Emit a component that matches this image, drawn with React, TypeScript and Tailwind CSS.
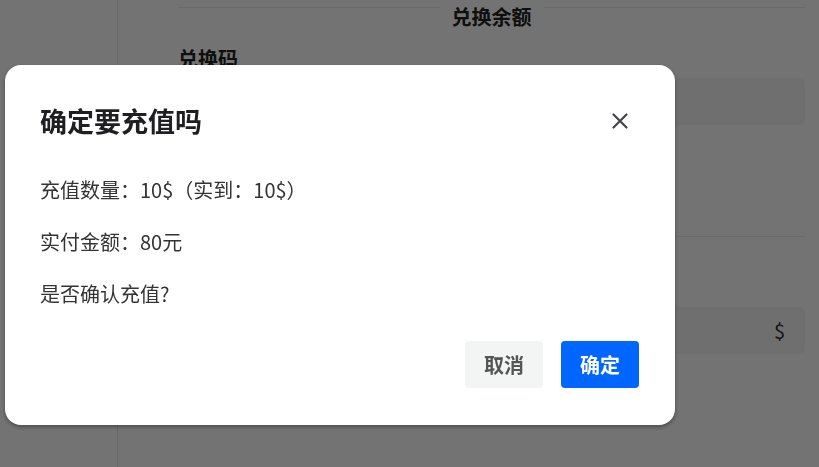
const FONT = { fontFamily: '"Noto Sans CJK SC", "Noto Sans", sans-serif' };

function Page() {
  return (
    <div className="flex h-[467px] w-[819px] bg-white" style={FONT}>
      {/* Sidebar */}
      <div className="w-[118px] shrink-0 border-r border-[#e5e7eb]" />

      {/* Main */}
      <div className="flex-1 pl-[60px] pr-[14px]">
        <div className="flex items-start">
          <div className="mt-[7px] h-px flex-1 bg-[#e8e8ea]" />
          <div className="mt-[1px] px-[12px] text-[20px] font-bold leading-[32px] text-[#222]">
            兑换余额
          </div>
          <div className="mt-[7px] h-px flex-1 bg-[#e8e8ea]" />
        </div>

        <div className="mt-[12px] text-[20px] font-bold leading-[28px] text-[#222]">兑换码</div>
        <div className="mt-[5px] h-[47px] rounded-[6px] bg-[#f6f6f8]" />

        <div className="mt-[111px] h-px bg-[#e8e8ea]" />

        <div className="mt-[70px] flex h-[47px] items-center justify-end rounded-[6px] bg-[#f6f6f8] pr-[20px] text-[20px] text-[#333]">
          $
        </div>
      </div>
    </div>
  );
}

function ConfirmDialog() {
  return (
    <div className="fixed inset-0 flex items-start bg-black/55 pl-[5px] pt-[65px]" style={FONT}>
      <div className="w-[670px] rounded-[16px] bg-white pb-[37px] pl-[35px] pr-[36px] pt-[40px] shadow-[0_2px_4px_rgba(0,0,0,0.35)]">
        <div className="flex h-[32px] items-center justify-between">
          <h2 className="text-[27px] font-bold leading-[32px] text-[#1f1f22]">确定要充值吗</h2>
          <button className="mr-[10px] flex h-[18px] w-[18px] items-center justify-center text-[#46464a]">
            <svg width="16" height="16" viewBox="0 0 16 16" fill="none">
              <path d="M1.5 1.5L14.5 14.5M14.5 1.5L1.5 14.5" stroke="currentColor" strokeWidth="2.2" strokeLinecap="round" />
            </svg>
          </button>
        </div>

        <div className="mt-[39px] flex flex-col gap-[24px] text-[20px] leading-[28px] text-[#333]">
          <p>充值数量：10$（实到：10$）</p>
          <p>实付金额：80元</p>
          <p>是否确认充值?</p>
        </div>

        <div className="mt-[33px] flex justify-end gap-[18px]">
          <button className="h-[47px] w-[78px] rounded-[4px] bg-[#f3f4f4] text-[20px] font-bold text-[#555]">
            取消
          </button>
          <button className="h-[47px] w-[78px] rounded-[4px] bg-[#0066ff] text-[20px] font-bold text-white">
            确定
          </button>
        </div>
      </div>
    </div>
  );
}

export default function App() {
  return (
    <div className="relative h-[467px] w-[819px] overflow-hidden">
      <Page />
      <ConfirmDialog />
    </div>
  );
}
